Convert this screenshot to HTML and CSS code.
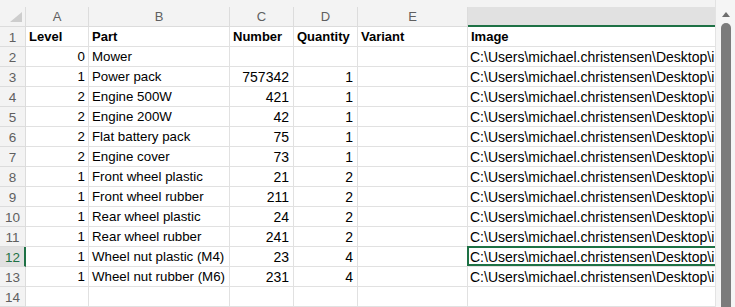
FILE: index.html
```html
<!DOCTYPE html>
<html>
<head>
<meta charset="utf-8">
<link rel="stylesheet" href="styles.css">
</head>
<body>
<div class="app">
  <div class="sheet">
    <div class="strip"></div>
    <div class="grid">
      <div class="corner"><span class="tri"></span></div>
      <div class="ch">A</div><div class="ch">B</div><div class="ch">C</div><div class="ch">D</div><div class="ch">E</div><div class="ch ch-sel"></div>

      <div class="rh">1</div><div class="c hd">Level</div><div class="c hd">Part</div><div class="c hd">Number</div><div class="c hd">Quantity</div><div class="c hd">Variant</div><div class="c hd">Image</div>
      <div class="rh">2</div><div class="c n">0</div><div class="c">Mower</div><div class="c a"></div><div class="c a"></div><div class="c"></div><div class="c p">C:\Users\michael.christensen\Desktop\i</div>
      <div class="rh">3</div><div class="c n">1</div><div class="c">Power pack</div><div class="c a">757342</div><div class="c a">1</div><div class="c"></div><div class="c p">C:\Users\michael.christensen\Desktop\i</div>
      <div class="rh">4</div><div class="c n">2</div><div class="c">Engine 500W</div><div class="c a">421</div><div class="c a">1</div><div class="c"></div><div class="c p">C:\Users\michael.christensen\Desktop\i</div>
      <div class="rh">5</div><div class="c n">2</div><div class="c">Engine 200W</div><div class="c a">42</div><div class="c a">1</div><div class="c"></div><div class="c p">C:\Users\michael.christensen\Desktop\i</div>
      <div class="rh">6</div><div class="c n">2</div><div class="c">Flat battery pack</div><div class="c a">75</div><div class="c a">1</div><div class="c"></div><div class="c p">C:\Users\michael.christensen\Desktop\i</div>
      <div class="rh">7</div><div class="c n">2</div><div class="c">Engine cover</div><div class="c a">73</div><div class="c a">1</div><div class="c"></div><div class="c p">C:\Users\michael.christensen\Desktop\i</div>
      <div class="rh">8</div><div class="c n">1</div><div class="c">Front wheel plastic</div><div class="c a">21</div><div class="c a">2</div><div class="c"></div><div class="c p">C:\Users\michael.christensen\Desktop\i</div>
      <div class="rh">9</div><div class="c n">1</div><div class="c">Front wheel rubber</div><div class="c a">211</div><div class="c a">2</div><div class="c"></div><div class="c p">C:\Users\michael.christensen\Desktop\i</div>
      <div class="rh">10</div><div class="c n">1</div><div class="c">Rear wheel plastic</div><div class="c a">24</div><div class="c a">2</div><div class="c"></div><div class="c p">C:\Users\michael.christensen\Desktop\i</div>
      <div class="rh">11</div><div class="c n">1</div><div class="c">Rear wheel rubber</div><div class="c a">241</div><div class="c a">2</div><div class="c"></div><div class="c p">C:\Users\michael.christensen\Desktop\i</div>
      <div class="rh rh-sel">12</div><div class="c n">1</div><div class="c">Wheel nut plastic (M4)</div><div class="c a">23</div><div class="c a">4</div><div class="c"></div><div class="c p cell-sel">C:\Users\michael.christensen\Desktop\i</div>
      <div class="rh">13</div><div class="c n">1</div><div class="c">Wheel nut rubber (M6)</div><div class="c a">231</div><div class="c a">4</div><div class="c"></div><div class="c p">C:\Users\michael.christensen\Desktop\i</div>
      <div class="rh">14</div><div class="c"></div><div class="c"></div><div class="c"></div><div class="c"></div><div class="c"></div><div class="c"></div>
    </div>
  </div>
  <div class="vscroll">
    <span class="arrow"></span>
    <div class="thumb"></div>
  </div>
</div>
</body>
</html>
```

FILE: styles.css
```css
* { box-sizing: border-box; }
html, body {
  margin: 0;
  padding: 0;
  background: #ffffff;
}
.app {
  display: flex;
  width: 735px;
  height: 307px;
  overflow: hidden;
  font-family: "Liberation Sans", Arial, sans-serif;
}
.sheet {
  flex: 1;
  min-width: 0;
  overflow: hidden;
  background: #ffffff;
}
.strip {
  height: 7px;
  background: #f3f3f3;
}
.grid {
  display: grid;
  grid-template-columns: 26px 63px 141px 64px 64px 110px 420px;
  grid-auto-rows: 20px;
  width: max-content;
}
.corner {
  background: #f3f3f3;
  border-right: 1px solid #dcdcdc;
  border-bottom: 1px solid #dcdcdc;
  display: flex;
  justify-content: flex-end;
  align-items: flex-end;
  padding: 0 3px 4px 0;
}
.tri {
  display: block;
  width: 12px;
  height: 10px;
  background: #cdcdcd;
  clip-path: polygon(100% 0, 100% 100%, 0 100%);
}
.ch {
  background: #f3f3f3;
  border-right: 1px solid #dcdcdc;
  border-bottom: 1px solid #dcdcdc;
  color: #5f5f5f;
  font-size: 13px;
  line-height: 19px;
  text-align: center;
}
.ch-sel {
  background: #e1e1e1;
  border-bottom: 2px solid #1e7145;
}
.rh {
  background: #f3f3f3;
  border-right: 1px solid #dcdcdc;
  border-bottom: 1px solid #dcdcdc;
  color: #5f5f5f;
  font-size: 13.5px;
  line-height: 19px;
  padding-top: 1px;
  text-align: center;
}
.rh-sel {
  background: #e1e1e1;
  border-right: 2px solid #1e7145;
  color: #1e7145;
  padding-left: 1px;
}
.c {
  position: relative;
  border-right: 1px solid #e1e1e1;
  border-bottom: 1px solid #e1e1e1;
  color: #000000;
  font-size: 13.3px;
  line-height: 18px;
  padding: 1px 3px 0;
  white-space: nowrap;
  overflow: hidden;
}
.hd {
  font-weight: bold;
  font-size: 13px;
}
.n { text-align: right; }
.a {
  text-align: right;
  font-size: 14px;
  padding-right: 4px;
}
.p {
  font-size: 14px;
  padding-left: 2px;
  overflow: visible;
}
.cell-sel::after {
  content: "";
  position: absolute;
  top: -1px;
  left: -1px;
  right: 0;
  bottom: 0;
  border: 2px solid #1e7145;
}
.vscroll {
  width: 20px;
  flex: none;
  background: #f5f5f5;
  border-left: 1px solid #e3e3e3;
  display: flex;
  flex-direction: column;
  align-items: center;
  padding-top: 12px;
}
.arrow {
  display: block;
  width: 0;
  height: 0;
  border-left: 4px solid transparent;
  border-right: 4px solid transparent;
  border-bottom: 5px solid #6e6e6e;
  margin-left: 1px;
}
.thumb {
  margin-top: 6px;
  margin-left: 1px;
  width: 10px;
  flex: 1;
  background: #7b7b7b;
  border-radius: 5px 5px 0 0;
}
```
